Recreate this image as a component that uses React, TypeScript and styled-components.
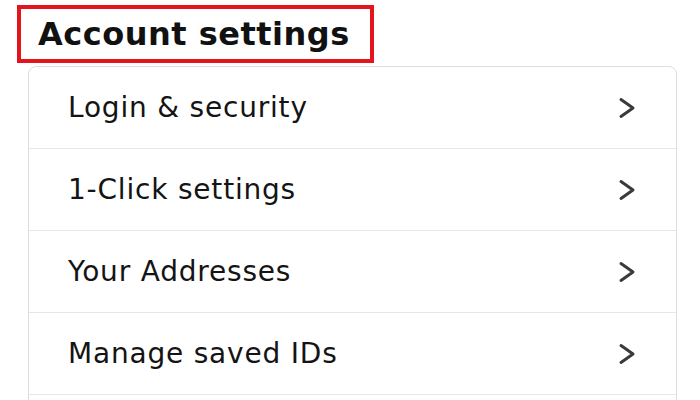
import React from 'react'
import styled, { createGlobalStyle } from 'styled-components'

const GlobalStyle = createGlobalStyle`
  html, body {
    margin: 0;
    padding: 0;
    background: #ffffff;
    font-family: "DejaVu Sans", "Noto Sans", sans-serif;
    color: #111111;
  }
`

const ROWS = ['Login & security', '1-Click settings', 'Your Addresses', 'Manage saved IDs']

const App = (): JSX.Element => {
  return (
    <Page>
      <GlobalStyle />
      <TitleBox>
        <Title>Account settings</Title>
      </TitleBox>
      <Card>
        {ROWS.map(label =>
          <Row key={label}>
            <Label>{label}</Label>
            <Chevron viewBox="0 0 18 22" aria-hidden>
              <path d="M3 2.5 L15 11 L3 19.5" />
            </Chevron>
          </Row>
        )}
      </Card>
    </Page>
  )
}

export default App

const Page = styled.div`
  padding: 5px 0 0 17px;
  width: 700px;
  height: 400px;
  box-sizing: border-box;
  overflow: hidden;
`

const TitleBox = styled.div`
  display: inline-flex;
  align-items: center;
  box-sizing: border-box;
  width: 357px;
  height: 58px;
  border: 4px solid #e3141c;
  padding-left: 17px;
`

const Title = styled.h1`
  margin: 0;
  font-size: 32px;
  font-weight: 700;
  letter-spacing: 0.5px;
  color: #111111;
`

const Card = styled.section`
  margin: 3px 0 0 11px;
  width: 649px;
  box-sizing: border-box;
  border: 1px solid #dedede;
  border-radius: 8px;
  background: #ffffff;
  padding-bottom: 40px;
`

const Row = styled.div`
  display: flex;
  align-items: center;
  justify-content: space-between;
  box-sizing: border-box;
  height: 82px;
  padding: 0 40px 0 39px;
  border-bottom: 1px solid #e6e6e6;
`

const Label = styled.span`
  font-size: 28px;
  letter-spacing: 0.8px;
  color: #141414;
`

const Chevron = styled.svg`
  width: 18px;
  height: 22px;
  fill: none;
  stroke: #3a3a3a;
  stroke-width: 3;
  stroke-linecap: round;
  stroke-linejoin: round;
`
